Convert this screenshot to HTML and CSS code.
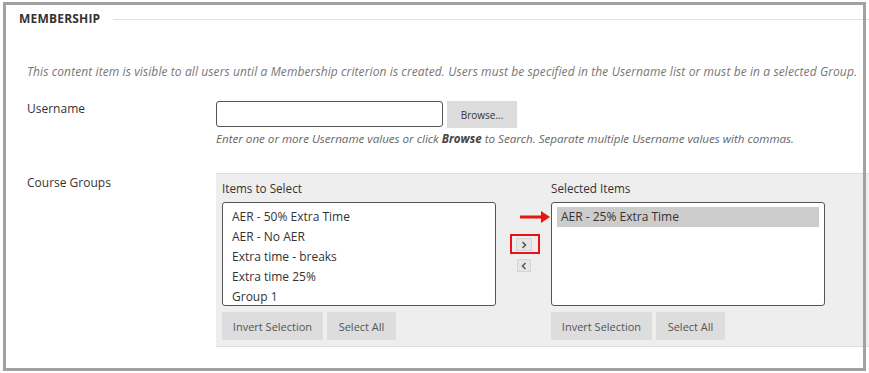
FILE: index.html
```html
<!DOCTYPE html>
<html lang="en">
<head>
    <meta charset="UTF-8">
    <title>Membership</title>
    <link rel="stylesheet" href="styles.css">
</head>
<body>
    <div class="page">
        <div class="section-head">
            <h2>Membership</h2>
            <span class="rule"></span>
        </div>

        <p class="intro">This content item is visible to all users until a Membership criterion is created. Users must be specified in the Username list or must be in a selected Group.</p>

        <div class="field">
            <label class="field-label" for="username">Username</label>
            <div class="field-body">
                <div class="input-row">
                    <input type="text" id="username" class="text-input">
                    <button class="btn btn-browse">Browse...</button>
                </div>
                <p class="help">Enter one or more Username values or click <b>Browse</b> to Search. Separate multiple Username values with commas.</p>
            </div>
        </div>

        <div class="field field-groups">
            <div class="field-label">Course Groups</div>
            <div class="picker">
                <div class="picker-col">
                    <div class="picker-title">Items to Select</div>
                    <ul class="list-box">
                        <li>AER - 50% Extra Time</li>
                        <li>AER - No AER</li>
                        <li>Extra time - breaks</li>
                        <li>Extra time 25%</li>
                        <li>Group 1</li>
                    </ul>
                    <div class="btn-row">
                        <button class="btn btn-invert">Invert Selection</button>
                        <button class="btn btn-all">Select All</button>
                    </div>
                </div>

                <div class="picker-move">
                    <button class="move move-right">
                        <svg width="6" height="8" viewBox="0 0 6 8"><path d="M1.5 1 L4.5 4 L1.5 7" fill="none" stroke="#555" stroke-width="1.5"/></svg>
                    </button>
                    <button class="move move-left">
                        <svg width="6" height="8" viewBox="0 0 6 8"><path d="M4.5 1 L1.5 4 L4.5 7" fill="none" stroke="#555" stroke-width="1.5"/></svg>
                    </button>
                    <span class="mark-box"></span>
                    <svg class="mark-arrow" width="31" height="14" viewBox="0 0 31 14">
                        <rect x="0" y="5.5" width="23" height="3" fill="#e8140e"/>
                        <path d="M21 1 L30 7 L21 13 Z" fill="#e8140e"/>
                    </svg>
                </div>

                <div class="picker-col">
                    <div class="picker-title">Selected Items</div>
                    <ul class="list-box">
                        <li class="selected">AER - 25% Extra Time</li>
                    </ul>
                    <div class="btn-row">
                        <button class="btn btn-invert">Invert Selection</button>
                        <button class="btn btn-all">Select All</button>
                    </div>
                </div>
            </div>
        </div>
    </div>

    <div class="frame"></div>
</body>
</html>
```

FILE: styles.css
```css
* {
    box-sizing: border-box;
}
body {
    margin: 0;
    font-family: "Open Sans", "Liberation Sans", sans-serif;
    color: #333;
    background: #fff;
    width: 869px;
    height: 373px;
    overflow: hidden;
    position: relative;
}
.page {
    padding: 12px 0 0 27px;
}
.section-head {
    display: flex;
    align-items: center;
    gap: 13px;
    margin-left: -8px;
    height: 14px;
}
.section-head h2 {
    margin: 0;
    font-size: 12px;
    line-height: 14px;
    font-weight: 700;
    text-transform: uppercase;
    letter-spacing: 0.2px;
    color: #333;
}
.section-head .rule {
    flex: 1;
    height: 1px;
    background: #e2e2e2;
}
.intro {
    margin: 38px 0 0;
    font-size: 12px;
    line-height: 16px;
    font-style: italic;
    letter-spacing: 0.1px;
    color: #777;
    white-space: nowrap;
}
.field {
    display: flex;
    margin-top: 21px;
}
.field-label {
    width: 189px;
    flex: none;
    font-size: 12px;
    line-height: 16px;
    padding-top: 0;
    color: #333;
}
.input-row {
    display: flex;
    gap: 4px;
}
.text-input {
    width: 227px;
    height: 26px;
    border: 1px solid #555;
    border-radius: 3px;
    margin: 0;
    padding: 2px 6px;
    font: inherit;
}
.btn {
    border: none;
    background: #ddd;
    color: #555;
    font-family: inherit;
    font-size: 10px;
    padding: 0;
    margin: 0;
    cursor: pointer;
}
.btn-browse {
    width: 70px;
    height: 27px;
    color: #333;
}
.help {
    margin: 3px 0 0;
    font-size: 11.6px;
    line-height: 16px;
    font-style: italic;
    color: #666;
    white-space: nowrap;
}
.help b {
    color: #444;
}
.field-groups {
    margin-top: 26px;
}
.field-groups .field-label {
    padding-top: 2px;
}
.picker {
    flex: 1;
    display: flex;
    background: #eee;
    border-top: 1px solid #ddd;
    border-bottom: 1px solid #ddd;
    padding: 6px 0 6px 6px;
    margin-right: -27px;
}
.picker-col {
    width: 274px;
}
.picker-title {
    font-size: 11.7px;
    line-height: 16px;
    margin-bottom: 6px;
    color: #333;
}
.list-box {
    list-style: none;
    margin: 0;
    padding: 4px 5px;
    height: 104px;
    background: #fff;
    border: 1px solid #555;
    border-radius: 3px;
    font-size: 12px;
}
.list-box li {
    line-height: 20px;
    padding-left: 4px;
    color: #333;
}
.list-box li.selected {
    background: #ccc;
}
.btn-row {
    display: flex;
    gap: 4px;
    margin-top: 6px;
}
.btn-invert {
    width: 101px;
    height: 28px;
    font-size: 11px;
}
.btn-all {
    width: 69px;
    height: 28px;
    font-size: 11px;
}
.picker-move {
    width: 55px;
    position: relative;
    display: flex;
    flex-direction: column;
    align-items: center;
    padding-top: 58px;
    gap: 8px;
}
.move {
    width: 14px;
    height: 13px;
    border: 1px solid #d4d4d4;
    background: #e6e6e6;
    padding: 0;
    display: flex;
    align-items: center;
    justify-content: center;
}
.move-right {
    width: 16px;
    margin-left: 1px;
}
.mark-box {
    position: absolute;
    left: 14px;
    top: 54px;
    width: 30px;
    height: 20px;
    border: 2px solid #ee1111;
}
.mark-arrow {
    position: absolute;
    left: 24px;
    top: 30px;
}
.frame {
    position: absolute;
    left: 3px;
    top: 2px;
    width: 863px;
    height: 369px;
    border: 3px solid #a2a2a2;
    pointer-events: none;
}
```
